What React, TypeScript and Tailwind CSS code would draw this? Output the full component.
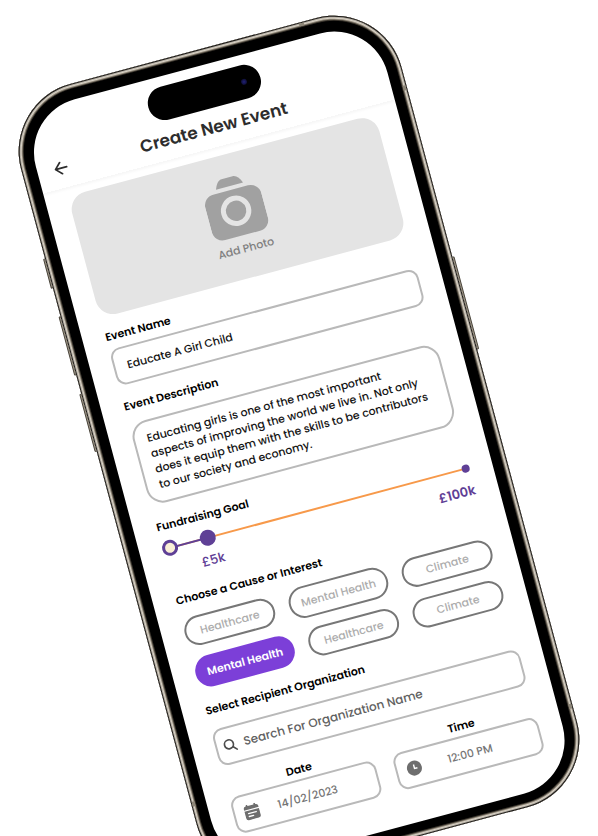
import { useState } from "react";

const labelClass = "block text-[11px] leading-4 font-semibold text-black";
const fieldClass =
  "block w-full rounded-[10px] border-2 border-[#b9b9b9] bg-white outline-none";

type ChipProps = { label: string; size: "regular" | "wide"; selected?: boolean };

function Chip({ label, size, selected = false }: ChipProps) {
  const width = size === "wide" ? "h-8 w-[102px]" : "h-[30px] w-[93px]";
  const tone = selected
    ? "border-[#7c3fd8] bg-[#7c3fd8] text-[11px] font-semibold text-white"
    : "border-[#777777] bg-white text-[11px] font-medium text-[#adadad]";
  return (
    <button
      type="button"
      aria-pressed={selected}
      className={`flex items-center justify-center rounded-full border-2 leading-4 whitespace-nowrap ${width} ${tone}`}
    >
      {label}
    </button>
  );
}

function CameraIcon() {
  return (
    <svg viewBox="0 0 58 62" className="h-[62px] w-[58px] shrink-0" aria-hidden="true">
      <path
        d="M15 10C17 5 19 1.500 23 1.200H34.500C38.500 1.500 41 5 43 10Z"
        fill="#a1a1a1"
      />
      <rect x="0" y="14" width="58" height="47" rx="11" fill="#a1a1a1" />
      <circle cx="29" cy="35.500" r="12.700" fill="#a1a1a1" stroke="#e4e4e4" strokeWidth="5" />
    </svg>
  );
}

function CalendarIcon() {
  return (
    <svg viewBox="0 0 16 16" className="size-4 shrink-0" aria-hidden="true">
      <path
        d="M4 0.900v2M12 0.900v2"
        stroke="#6e6e6e"
        strokeWidth="1.800"
        strokeLinecap="round"
      />
      <path d="M0.500 5V4a2.500 2.500 0 0 1 2.500-2.500h10A2.500 2.500 0 0 1 15.500 4v1Z" fill="#6e6e6e" />
      <path d="M0.500 6.200h15V13A2.500 2.500 0 0 1 13 15.500H3A2.500 2.500 0 0 1 0.500 13Z" fill="#6e6e6e" />
      <path d="M4 9h8M4 12h4.500" stroke="#ffffff" strokeWidth="1.300" strokeLinecap="round" />
    </svg>
  );
}

function ClockIcon() {
  return (
    <svg viewBox="0 0 16 16" className="size-4 shrink-0" aria-hidden="true">
      <circle cx="8" cy="8" r="7.500" fill="#6e6e6e" />
      <path d="M8 4.200V8.400H11" fill="none" stroke="#ffffff" strokeWidth="1.400" />
    </svg>
  );
}

function SearchIcon() {
  return (
    <svg viewBox="0 0 14 14" className="size-[14px] shrink-0" aria-hidden="true">
      <circle cx="6" cy="6" r="4.500" fill="none" stroke="#4c4c4c" strokeWidth="1.700" />
      <path d="M9.500 9.500L12.800 12.800" stroke="#4c4c4c" strokeWidth="1.700" strokeLinecap="round" />
    </svg>
  );
}

function SideKeys() {
  const key = "absolute w-1 rounded-[1px] border border-[#4a453c] bg-[#a59c8c]";
  return (
    <>
      <span className={`${key} top-[162px] -left-[2px] h-[31px]`} />
      <span className={`${key} top-[222px] -left-[2px] h-[61px]`} />
      <span className={`${key} top-[302px] -left-[2px] h-[60px]`} />
      <span className={`${key} top-[266px] -right-[2px] h-[96px]`} />
    </>
  );
}

function AntennaBands() {
  const band = "absolute bg-[#8d8678]";
  return (
    <>
      <span className={`${band} top-px left-[306px] h-[3px] w-[5px]`} />
      <span className={`${band} top-[88px] right-px h-[5px] w-[3px]`} />
      <span className={`${band} top-[725px] left-px h-[5px] w-[3px]`} />
      <span className={`${band} top-[728px] right-px h-[5px] w-[3px]`} />
    </>
  );
}

function Header() {
  return (
    <header className="relative h-[83px] shadow-[0_2px_3px_rgba(0,0,0,0.04)]">
      <div className="absolute top-[10px] left-1/2 h-[34px] w-[116px] -translate-x-1/2 rounded-full bg-black">
        <span className="absolute top-[14px] right-[14px] size-[6px] rounded-full bg-[radial-gradient(circle,#22227a,#050514)]" />
      </div>
      <div className="flex items-center px-[17px] pt-[51px]">
        <button type="button" aria-label="Back" className="flex h-6 w-[14px] items-center">
          <svg viewBox="0 0 14 14" className="size-[14px]" aria-hidden="true">
            <path
              d="M7 1.200L1.200 7L7 12.800M1.200 7H12.800"
              fill="none"
              stroke="#2d2d2d"
              strokeWidth="1.700"
              strokeLinecap="round"
              strokeLinejoin="round"
            />
          </svg>
        </button>
        <h1 className="grow pr-[14px] text-center text-[17px] leading-6 font-semibold text-[#2d2d2d]">
          Create New Event
        </h1>
      </div>
    </header>
  );
}

function GoalSlider() {
  const [goal, setGoal] = useState(11);
  return (
    <div>
      <label htmlFor="goal" className={`mt-[14px] ${labelClass}`}>
        Fundraising Goal
      </label>
      <div className="relative mt-[7px] h-4 pr-1 pl-[7px]">
        <div className="absolute top-[7px] right-1 left-[7px] h-[2px] bg-[#f7994a]">
          <div className="h-full bg-[#5f4096]" style={{ width: `${goal + 2}%` }} />
        </div>
        <span className="absolute top-0 left-0 size-4 rounded-full border-[3px] border-[#5f4096] bg-[#faefd6]" />
        <span className="absolute top-1 right-0 size-2 rounded-full bg-[#5f4096]" />
        <input
          id="goal"
          type="range"
          min={0}
          max={100}
          value={goal}
          onChange={(e) => setGoal(Number(e.target.value))}
          className="relative block h-4 w-full appearance-none bg-transparent [&::-webkit-slider-thumb]:size-4 [&::-webkit-slider-thumb]:appearance-none [&::-webkit-slider-thumb]:rounded-full [&::-webkit-slider-thumb]:bg-[#5f4096]"
        />
      </div>
      <div className="mt-[5px] flex justify-between pl-[35px] text-[13px] leading-5 text-[#5f4096]">
        <span className="font-medium">£5k</span>
        <span className="font-semibold">£100k</span>
      </div>
    </div>
  );
}

export default function App() {
  return (
    <main className="flex h-screen w-full justify-center overflow-hidden bg-white pt-[37px] font-['Poppins','Inter',sans-serif]">
      <div className="relative h-[817px] w-[394px] shrink-0 rotate-[-15deg]">
        <SideKeys />
        <div className="relative h-full rounded-[70px] bg-black px-[15px] pt-4 pb-[14px] shadow-[inset_0_0_0_1px_#1b1917,inset_0_0_0_2px_#b5afa4,inset_0_0_0_3px_#d9d2c6,inset_0_0_0_4px_#91897b,inset_0_0_0_5px_#3a352d]">
          <AntennaBands />
          <div className="h-full overflow-hidden rounded-[55px] bg-white">
            <Header />
            <form className="px-[23px] pt-[9px]">
              <button
                type="button"
                className="flex h-[126px] w-full flex-col items-center rounded-[18px] bg-[#e4e4e4] pt-[22px] text-[11px] leading-4 font-medium text-[#7f7f7f]"
              >
                <CameraIcon />
                <span className="mt-1">Add Photo</span>
              </button>

              <label htmlFor="name" className={`mt-3 ${labelClass}`}>
                Event Name
              </label>
              <input
                id="name"
                defaultValue="Educate A Girl Child"
                className={`mt-[5px] h-[38px] px-3 text-[11px] font-medium text-[#151515] ${fieldClass}`}
              />

              <label htmlFor="description" className={`mt-[13px] ${labelClass}`}>
                Event Description
              </label>
              <textarea
                id="description"
                defaultValue={
                  "Educating girls is one of the most important\naspects of improving the world we live in. Not only\ndoes it equip them with the skills to be contributors\nto our society and economy."
                }
                className="mt-[10px] block h-[85px] w-full resize-none overflow-hidden rounded-[17px] border-2 border-[#b9b9b9] bg-white px-3 py-2 text-[11px] leading-4 font-medium whitespace-pre text-[#151515] outline-none"
              />

              <GoalSlider />

              <fieldset className="mt-3">
                <legend className={labelClass}>Choose a Cause or Interest</legend>
                <div className="mt-[10px] flex h-8 items-center justify-between">
                  <Chip label="Healthcare" size="regular" />
                  <Chip label="Mental Health" size="wide" />
                  <Chip label="Climate" size="regular" />
                </div>
                <div className="mt-[10px] flex h-8 items-center justify-between">
                  <Chip label="Mental Health" size="wide" selected />
                  <Chip label="Healthcare" size="regular" />
                  <Chip label="Climate" size="regular" />
                </div>
              </fieldset>

              <label htmlFor="organization" className={`mt-[14px] ${labelClass}`}>
                Select Recipient Organization
              </label>
              <div className={`mt-3 flex h-[38px] items-center px-[6px] ${fieldClass}`}>
                <SearchIcon />
                <input
                  id="organization"
                  type="search"
                  placeholder="Search For Organization Name"
                  className="ml-[7px] min-w-0 grow text-xs font-medium outline-none placeholder:text-[#626262]"
                />
              </div>

              <div className="mt-[14px] grid grid-cols-2 gap-[18px]">
                <div>
                  <label htmlFor="date" className={`text-center ${labelClass}`}>
                    Date
                  </label>
                  <div className={`mt-[2px] flex h-[38px] items-center pr-[22px] pl-[9px] ${fieldClass}`}>
                    <CalendarIcon />
                    <input
                      id="date"
                      defaultValue="14/02/2023"
                      className="min-w-0 grow text-center text-[11px] font-medium text-[#757575] outline-none"
                    />
                  </div>
                </div>
                <div>
                  <label htmlFor="time" className={`text-center ${labelClass}`}>
                    Time
                  </label>
                  <div className={`mt-[2px] flex h-[38px] items-center pr-[22px] pl-[9px] ${fieldClass}`}>
                    <ClockIcon />
                    <input
                      id="time"
                      defaultValue="12:00 PM"
                      className="min-w-0 grow text-center text-[11px] font-medium text-[#757575] outline-none"
                    />
                  </div>
                </div>
              </div>
            </form>
          </div>
        </div>
      </div>
    </main>
  );
}
